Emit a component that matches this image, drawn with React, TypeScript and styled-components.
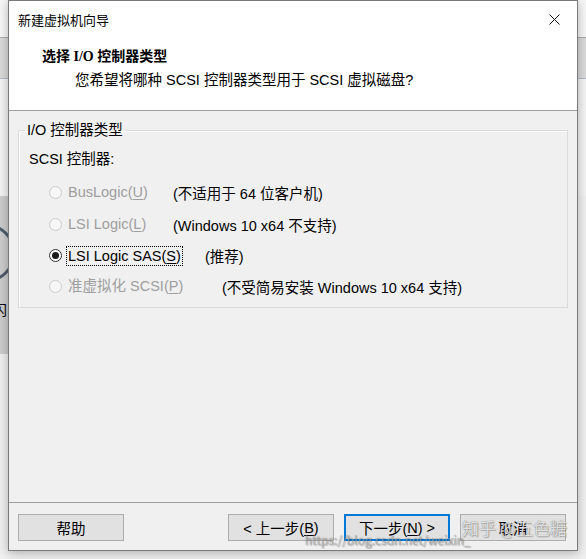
import React from 'react'
import styled, { createGlobalStyle } from 'styled-components'

const GlobalStyle = createGlobalStyle`
  html, body {
    margin: 0;
    padding: 0;
    background: #f0f0f0;
  }
  body {
    font-family: "Liberation Sans", "Noto Sans CJK SC", sans-serif;
    font-size: 14.5px;
    color: #000;
  }
`

const Desktop = styled.div`
  position: relative;
  width: 586px;
  height: 559px;
  overflow: hidden;
  background: #f0f0f0;
`

// window that sits behind the dialog, only its edges show
const BackWindow = styled.div`
  display: flex;
  flex-direction: column;
  height: 100%;
`

const BackStrip = styled.div<{ $h: number; $bg: string; $line?: string }>`
  height: ${p => p.$h}px;
  background: ${p => p.$bg};
  border-bottom: ${p => (p.$line ? `1px solid ${p.$line}` : 'none')};
  flex-shrink: 0;
`

const BackPanel = styled.div`
  height: 158px;
  width: 60px;
  background: #cdcdcd;
  display: flex;
  flex-direction: column;
  justify-content: flex-end;
  padding-bottom: 36px;
  box-sizing: border-box;
`

const BackGlyph = styled.span`
  margin-left: -7px;
  font-size: 14px;
  line-height: 16px;
`

const Dialog = styled.div`
  position: absolute;
  left: 8px;
  top: 0;
  width: 570px;
  height: 551px;
  box-sizing: border-box;
  border: 1px solid #7a7a7a;
  background: #f0f0f0;
  box-shadow: 0 2px 10px rgba(0, 0, 0, 0.28);
  display: flex;
  flex-direction: column;
`

const TitleBar = styled.div`
  height: 36px;
  background: #fff;
  display: flex;
  align-items: center;
  justify-content: space-between;
  padding: 0 0 0 9px;
  font-family: "Noto Sans CJK SC", sans-serif;
  font-size: 13px;
  flex-shrink: 0;
`

const CloseBox = styled.div`
  width: 46px;
  height: 36px;
  display: flex;
  align-items: center;
  justify-content: center;
`

const Header = styled.div`
  height: 74px;
  box-sizing: border-box;
  background: #fff;
  border-bottom: 1px solid #a0a0a0;
  padding: 10px 0 0 33px;
  flex-shrink: 0;
`

const HeaderTitle = styled.div`
  font-family: "Liberation Serif", "Noto Sans CJK SC", serif;
  font-weight: bold;
  font-size: 14px;
  line-height: 20px;
`

const HeaderSub = styled.div`
  margin: 3px 0 0 33px;
  font-size: 14.5px;
  line-height: 20px;
`

const Body = styled.div`
  flex: 1;
  padding: 11px 9px 0 9px;
`

const Group = styled.fieldset`
  margin: 0;
  padding: 11px 0 6px 10px;
  border: 1px solid #dadada;
  box-shadow: inset 1px 1px 0 #fff;
`

const GroupLabel = styled.legend`
  padding: 0 2px;
  margin-left: -4px;
  line-height: 16px;
`

const FieldLabel = styled.div`
  line-height: 20px;
  margin-bottom: 7px;
`

const OptionRow = styled.div<{ $h: number }>`
  height: ${p => p.$h}px;
  display: flex;
  align-items: center;
  padding-left: 20px;
`

const OptionControl = styled.div<{ $width: number }>`
  width: ${p => p.$width}px;
  display: flex;
  align-items: center;
  flex-shrink: 0;
`

const RadioCircle = styled.span<{ $checked?: boolean; $disabled?: boolean }>`
  width: 13px;
  height: 13px;
  box-sizing: border-box;
  border-radius: 50%;
  border: 1px solid ${p => (p.$disabled ? '#cccccc' : '#333333')};
  background: ${p => (p.$disabled ? '#f7f7f7' : '#fff')};
  display: flex;
  align-items: center;
  justify-content: center;
  margin-right: 5px;
  flex-shrink: 0;

  &::after {
    content: '';
    display: ${p => (p.$checked ? 'block' : 'none')};
    width: 7px;
    height: 7px;
    border-radius: 50%;
    background: #1a1a1a;
  }
`

const OptionText = styled.span<{ $disabled?: boolean; $focused?: boolean }>`
  color: ${p => (p.$disabled ? '#9e9e9e' : '#000')};
  outline: ${p => (p.$focused ? '1px dotted #000' : 'none')};
  line-height: 18px;
  padding: 0 1px;
  white-space: nowrap;
`

const Desc = styled.span`
  white-space: nowrap;
`

const Footer = styled.div`
  border-top: 1px solid #a0a0a0;
  padding: 11px 11px 9px 9px;
  display: flex;
  justify-content: space-between;
  align-items: center;
`

const ButtonGroup = styled.div`
  display: flex;
  gap: 10px;
`

const Button = styled.button<{ $primary?: boolean }>`
  width: 106px;
  height: 27px;
  box-sizing: border-box;
  background: #e1e1e1;
  border: 1px solid ${p => (p.$primary ? '#0078d7' : '#adadad')};
  box-shadow: ${p => (p.$primary ? 'inset 0 0 0 1px #0078d7' : 'none')};
  font-family: "Liberation Sans", "Noto Sans CJK SC", sans-serif;
  font-size: 14.5px;
  color: #000;
  padding: 0;
  display: flex;
  align-items: center;
  justify-content: center;
`

const Key = styled.span`
  text-decoration: underline;
  text-underline-offset: 2px;
`

const Watermark = styled.div<{ $size: number; $alpha: number }>`
  position: absolute;
  font-family: "Noto Sans CJK SC", sans-serif;
  font-size: ${p => p.$size}px;
  line-height: 1.2;
  color: rgba(255, 255, 255, ${p => p.$alpha});
  text-shadow: 0 0 1px rgba(0, 0, 0, 0.55), 1px 1px 1px rgba(0, 0, 0, 0.2);
  white-space: nowrap;
  pointer-events: none;
`

type Option = {
  label: string
  key: string
  desc: string
  width: number
  height: number
  checked?: boolean
  disabled?: boolean
}

const options: Option[] = [
  { label: 'BusLogic', key: 'U', desc: '(不适用于 64 位客户机)', width: 124, height: 32, disabled: true },
  { label: 'LSI Logic', key: 'L', desc: '(Windows 10 x64 不支持)', width: 124, height: 32, disabled: true },
  { label: 'LSI Logic SAS', key: 'S', desc: '(推荐)', width: 156, height: 31, checked: true },
  { label: '准虚拟化 SCSI', key: 'P', desc: '(不受简易安装 Windows 10 x64 支持)', width: 173, height: 30, disabled: true },
]

export default function App() {
  return (
    <Desktop>
      <GlobalStyle />
      <BackWindow>
        <BackStrip $h={37} $bg="#f7f7f7" $line="#a9a9a9" />
        <BackStrip $h={40} $bg="#dadada" $line="#b0bccb" />
        <BackStrip $h={117} $bg="#f4f4f4" />
        <BackPanel>
          <svg width="20" height="70" viewBox="0 0 20 70" style={{ marginBottom: 14 }}>
            <circle cx="-14" cy="35" r="28" fill="none" stroke="#4f5d6a" strokeWidth="3" />
          </svg>
          <BackGlyph>闪</BackGlyph>
        </BackPanel>
      </BackWindow>

      <Dialog>
        <TitleBar>
          <span>新建虚拟机向导</span>
          <CloseBox>
            <svg width="11" height="11" viewBox="0 0 11 11">
              <path d="M0.5 0.5 L10.5 10.5 M10.5 0.5 L0.5 10.5" stroke="#111" strokeWidth="1" />
            </svg>
          </CloseBox>
        </TitleBar>

        <Header>
          <HeaderTitle>选择 I/O 控制器类型</HeaderTitle>
          <HeaderSub>您希望将哪种 SCSI 控制器类型用于 SCSI 虚拟磁盘?</HeaderSub>
        </Header>

        <Body>
          <Group>
            <GroupLabel>I/O 控制器类型</GroupLabel>
            <FieldLabel>SCSI 控制器:</FieldLabel>
            {options.map(o => (
              <OptionRow key={o.key} $h={o.height}>
                <OptionControl $width={o.width}>
                  <RadioCircle $checked={o.checked} $disabled={o.disabled} />
                  <OptionText $disabled={o.disabled} $focused={o.checked}>
                    {o.label}(<Key>{o.key}</Key>)
                  </OptionText>
                </OptionControl>
                <Desc>{o.desc}</Desc>
              </OptionRow>
            ))}
          </Group>
        </Body>

        <Footer>
          <Button>帮助</Button>
          <ButtonGroup>
            <Button>&lt; 上一步(<Key>B</Key>)</Button>
            <Button $primary>下一步(<Key>N</Key>) &gt;</Button>
            <Button>取消</Button>
          </ButtonGroup>
        </Footer>
      </Dialog>

      <Watermark $size={12} $alpha={0.45} style={{ left: 305, top: 533 }}>
        https://blog.csdn.net/weixin_
      </Watermark>
      <Watermark $size={17} $alpha={0.8} style={{ left: 462, top: 518 }}>
        知乎 @五色糖
      </Watermark>
    </Desktop>
  )
}
